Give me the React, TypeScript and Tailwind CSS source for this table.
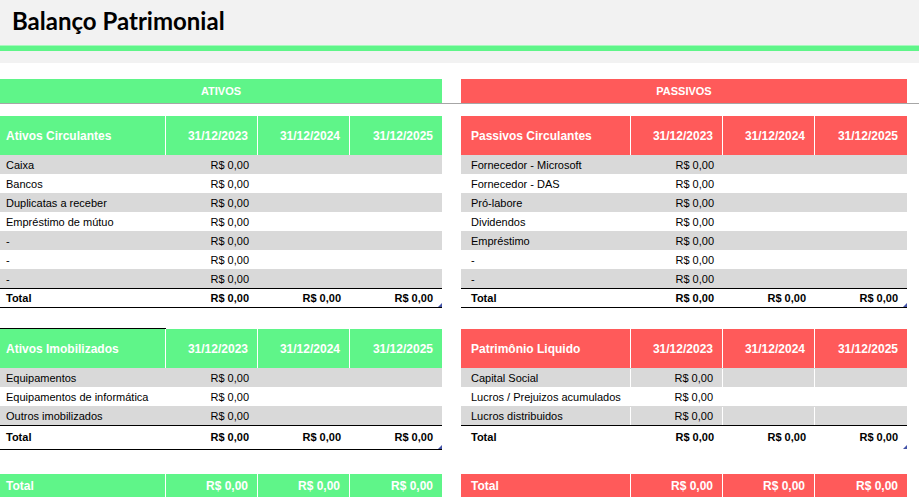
import React from "react";

type Row = { label: string; value?: string };

const GREEN = "bg-[#5ff589]";
const RED = "bg-[#ff5a5a]";

const circulantes: Row[] = [
  { label: "Caixa", value: "R$ 0,00" },
  { label: "Bancos", value: "R$ 0,00" },
  { label: "Duplicatas a receber", value: "R$ 0,00" },
  { label: "Empréstimo de mútuo", value: "R$ 0,00" },
  { label: "-", value: "R$ 0,00" },
  { label: "-", value: "R$ 0,00" },
  { label: "-", value: "R$ 0,00" },
];

const imobilizados: Row[] = [
  { label: "Equipamentos", value: "R$ 0,00" },
  { label: "Equipamentos de informática", value: "R$ 0,00" },
  { label: "Outros imobilizados", value: "R$ 0,00" },
];

const passivosCirc: Row[] = [
  { label: "Fornecedor - Microsoft", value: "R$ 0,00" },
  { label: "Fornecedor - DAS", value: "R$ 0,00" },
  { label: "Pró-labore", value: "R$ 0,00" },
  { label: "Dividendos", value: "R$ 0,00" },
  { label: "Empréstimo", value: "R$ 0,00" },
  { label: "-", value: "R$ 0,00" },
  { label: "-", value: "R$ 0,00" },
];

const patrimonio: Row[] = [
  { label: "Capital Social", value: "R$ 0,00" },
  { label: "Lucros / Prejuizos acumulados", value: "R$ 0,00" },
  { label: "Lucros distribuidos", value: "R$ 0,00" },
];

const dates = ["31/12/2023", "31/12/2024", "31/12/2025"];

function Handle() {
  return (
    <span className="absolute bottom-0 right-0 w-0 h-0 border-l-[4px] border-l-transparent border-b-[4px] border-b-[#4353a8]" />
  );
}

function Block({
  title,
  rows,
  color,
  labelW,
  pad,
  grid = false,
  topLine = false,
  tallTotal = false,
  noBottom = false,
}: {
  title: string;
  rows: Row[];
  color: string;
  labelW: string;
  pad: string;
  grid?: boolean;
  topLine?: boolean;
  tallTotal?: boolean;
  noBottom?: boolean;
}) {
  const sep = grid ? "border-r border-white" : "";
  return (
    <div className="flex flex-col">
      <div className={`h-px ${topLine ? "bg-black" : ""} ${labelW}`} />
      <div className={`flex h-[39px] ${color} text-white font-bold text-[12px]`}>
        <div className={`${labelW} ${pad} flex items-center border-r border-white`}>{title}</div>
        {dates.map((d, i) => (
          <div
            key={d}
            className={`w-[92px] flex items-center justify-end pr-[9px] ${i < 2 ? "border-r border-white" : ""}`}
          >
            {d}
          </div>
        ))}
      </div>
      {rows.map((r, idx) => (
        <div
          key={idx}
          className={`flex h-[19px] pt-px text-[11px] text-black ${idx % 2 === 0 ? "bg-[#d9d9d9]" : "bg-white"}`}
        >
          <div className={`${labelW} ${pad} flex items-center ${sep}`}>{r.label}</div>
          <div className={`w-[92px] flex items-center justify-end pr-[9px] ${sep}`}>{r.value}</div>
          <div className={`w-[92px] ${sep}`} />
          <div className="w-[92px]" />
        </div>
      ))}
      <div
        className={`flex border-t border-black ${noBottom ? "border-b border-b-transparent" : "border-b"} ${
          tallTotal ? "h-[25px]" : "h-[20px]"
        } text-[11px] font-bold text-black`}
      >
        <div className={`${labelW} ${pad} flex items-center`}>Total</div>
        <div className="w-[92px] flex items-center justify-end pr-[9px]">R$ 0,00</div>
        <div className="w-[92px] flex items-center justify-end pr-[9px]">R$ 0,00</div>
        <div className="relative w-[92px] flex items-center justify-end pr-[9px]">
          R$ 0,00
          <Handle />
        </div>
      </div>
    </div>
  );
}

function FooterTotal({ color, labelW, pad }: { color: string; labelW: string; pad: string }) {
  return (
    <div className={`flex h-[23px] ${color} text-white font-bold text-[12px]`}>
      <div className={`${labelW} ${pad} flex items-center border-r border-white`}>Total</div>
      {[0, 1, 2].map((i) => (
        <div
          key={i}
          className={`w-[92px] flex items-center justify-end pr-[9px] ${i < 2 ? "border-r border-white" : ""}`}
        >
          R$ 0,00
        </div>
      ))}
    </div>
  );
}

export default function App() {
  return (
    <div className="w-[919px] h-[501px] overflow-hidden bg-white font-['Liberation_Sans',Arial,sans-serif]">
      <div className="h-[45px] bg-[#f2f2f2] flex items-center pl-[12px] pb-[4px]">
        <h1 className="font-['Lato','Noto_Sans',sans-serif] font-bold text-[24px] text-black">
          Balanço Patrimonial
        </h1>
      </div>
      <div className="h-[6px] bg-[#5ff589] border-t border-[#a8f8bd]" />
      <div className="h-[12px] bg-[#f2f2f2]" />

      <div className="mt-[16px] flex gap-[19px] border-b border-[#a6a6a6]">
        <div className={`w-[442px] h-[24px] ${GREEN} flex items-center justify-center text-white font-bold text-[11px]`}>
          ATIVOS
        </div>
        <div className={`w-[446px] h-[24px] ${RED} flex items-center justify-center text-white font-bold text-[11px]`}>
          PASSIVOS
        </div>
      </div>

      <div className="mt-[11px] flex gap-[19px]">
        <div className="w-[442px] flex flex-col">
          <Block title="Ativos Circulantes" rows={circulantes} color={GREEN} labelW="w-[166px]" pad="pl-[6px]" />
          <div className="h-[20px]" />
          <Block
            title="Ativos Imobilizados"
            rows={imobilizados}
            color={GREEN}
            labelW="w-[166px]"
            pad="pl-[6px]"
            topLine
            tallTotal
          />
          <div className="h-[24px]" />
          <FooterTotal color={GREEN} labelW="w-[166px]" pad="pl-[6px]" />
        </div>
        <div className="w-[446px] flex flex-col">
          <Block title="Passivos Circulantes" rows={passivosCirc} color={RED} labelW="w-[170px]" pad="pl-[10px]" />
          <div className="h-[20px]" />
          <Block
            title="Patrimônio Liquido"
            rows={patrimonio}
            color={RED}
            labelW="w-[170px]"
            pad="pl-[10px]"
            grid
            tallTotal
            noBottom
          />
          <div className="h-[24px]" />
          <FooterTotal color={RED} labelW="w-[170px]" pad="pl-[10px]" />
        </div>
      </div>
    </div>
  );
}
